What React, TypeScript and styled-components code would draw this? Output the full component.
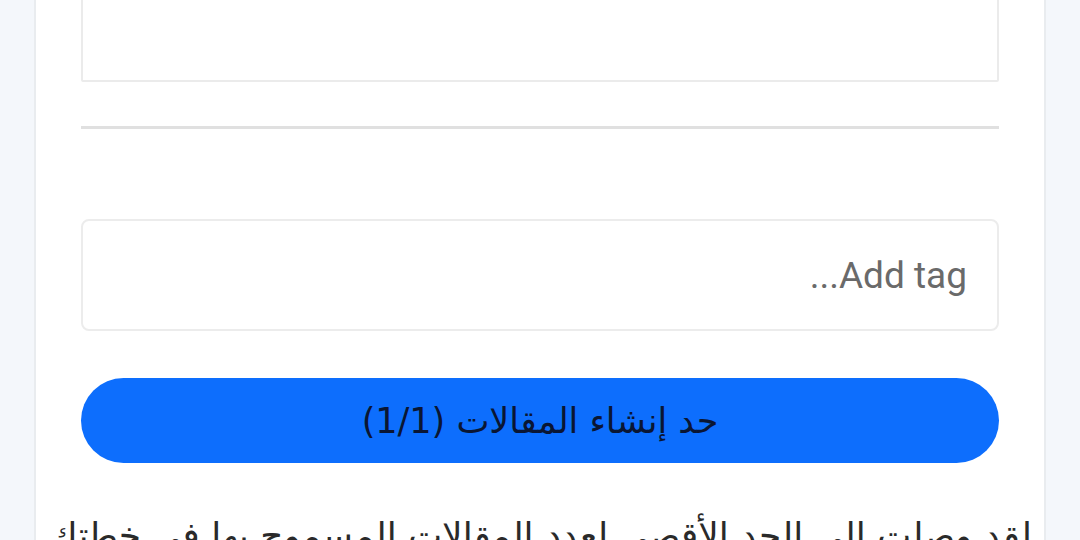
import styled, { createGlobalStyle } from "styled-components";

const GlobalStyle = createGlobalStyle`
  html,
  body {
    margin: 0;
    padding: 0;
    background-color: #f4f7fb;
    overflow: hidden;
  }
`;

const Page = styled.div`
  width: 1080px;
  height: 540px;
  overflow: hidden;
  padding: 0 34px;
  box-sizing: border-box;
`;

const Card = styled.div`
  margin-top: -80px;
  background-color: #ffffff;
  border-left: 2px solid #e9ecef;
  border-right: 2px solid #e9ecef;
  padding: 0 45px 40px;
  direction: rtl;
  font-family: "DejaVu Sans", "Noto Sans", sans-serif;

  .editor {
    display: block;
    width: 100%;
    height: 162px;
    box-sizing: border-box;
    border: 2px solid #ebebeb;
    border-radius: 2px;
    resize: none;
    background-color: #fff;
  }

  .divider {
    height: 0;
    margin: 44px 0 0;
    border: none;
    border-top: 3px solid #e0e0e0;
  }
`;

const TagInput = styled.input`
  display: block;
  width: 100%;
  height: 112px;
  margin-top: 90px;
  box-sizing: border-box;
  border: 2px solid #ececec;
  border-radius: 8px;
  padding: 0 30px;
  font-family: Roboto, "Liberation Sans", sans-serif;
  font-size: 37px;
  color: #333;
  text-align: right;
  direction: rtl;
  outline: none;

  &::placeholder {
    color: #6a6a6a;
  }
`;

const LimitButton = styled.button<{ $tone: string }>`
  display: flex;
  align-items: center;
  justify-content: center;
  width: 100%;
  height: 85px;
  margin-top: 47px;
  border: none;
  border-radius: 43px;
  background-color: ${(p) => p.$tone};
  color: #0a1633;
  font-family: "DejaVu Sans", sans-serif;
  font-size: 35px;
  cursor: not-allowed;
`;

const Notice = styled.p`
  margin: 52px -40px 0;
  text-align: center;
  white-space: nowrap;
  font-size: 36px;
  color: #2a2a2a;
`;

export default function App() {
  return (
    <>
      <GlobalStyle />
      <Page>
        <Card>
          <textarea className="editor" />
          <hr className="divider" />
          <TagInput placeholder="Add tag..." />
          <LimitButton $tone="#0d6efd">حد إنشاء المقالات (1/1)</LimitButton>
          <Notice>لقد وصلت إلى الحد الأقصى لعدد المقالات المسموح بها في خطتك</Notice>
        </Card>
      </Page>
    </>
  );
}
